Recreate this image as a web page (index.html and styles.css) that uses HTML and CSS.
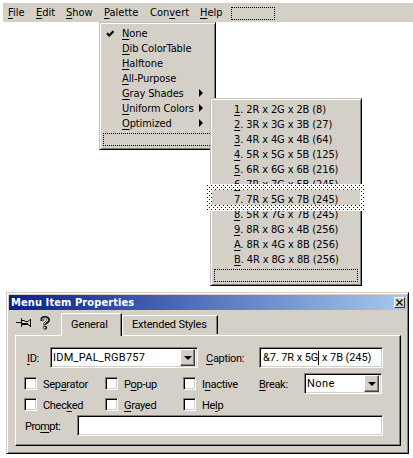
FILE: index.html
```
<!DOCTYPE html>
<html lang="en">
<head>
<meta charset="utf-8">
<title>Menu Item Properties</title>
<link rel="stylesheet" href="styles.css">
</head>
<body>
<nav class="menubar">
  <span class="m-file"><u>F</u>ile</span><span class="m-edit"><u>E</u>dit</span><span class="m-show"><u>S</u>how</span><span class="m-palette"><u>P</u>alette</span><span class="m-convert">Con<u>v</u>ert</span><span class="m-help"><u>H</u>elp</span><i class="slot"></i>
</nav>
<div class="popup palette">
  <div class="item"><svg class="check" width="9" height="8" viewBox="0 0 9 8"><path d="M1 3.2 3.2 5.5 7.5 1.2" fill="none" stroke="#000" stroke-width="2.2"/></svg><span><u>N</u>one</span></div>
  <div class="item"><span><u>D</u>ib ColorTable</span></div>
  <div class="item"><span><u>H</u>alftone</span></div>
  <div class="item"><span><u>A</u>ll-Purpose</span></div>
  <div class="item sub"><span><u>G</u>ray Shades</span></div>
  <div class="item sub"><span><u>U</u>niform Colors</span></div>
  <div class="item sub"><span><u>O</u>ptimized</span></div>
  <i class="slot"></i>
</div>
<div class="popup uniform">
  <div class="item"><span><u>1</u>. 2R x 2G x 2B (8)</span></div>
  <div class="item"><span><u>2</u>. 3R x 3G x 3B (27)</span></div>
  <div class="item"><span><u>3</u>. 4R x 4G x 4B (64)</span></div>
  <div class="item"><span><u>4</u>. 5R x 5G x 5B (125)</span></div>
  <div class="item"><span><u>5</u>. 6R x 6G x 6B (216)</span></div>
  <div class="item"><span><u>6</u>. 7R x 7G x 5B (245)</span></div>
  <div class="item"><span><u>7</u>. 7R x 5G x 7B (245)</span></div>
  <div class="item"><span><u>8</u>. 5R x 7G x 7B (245)</span></div>
  <div class="item"><span><u>9</u>. 8R x 8G x 4B (256)</span></div>
  <div class="item"><span><u>A</u>. 8R x 4G x 8B (256)</span></div>
  <div class="item"><span><u>B</u>. 4R x 8G x 8B (256)</span></div>
  <i class="slot"></i>
  <svg class="frame" width="158" height="27" viewBox="0 0 158 27">
    <defs><pattern id="dots" y="1" width="4" height="4" patternUnits="userSpaceOnUse"><rect width="4" height="4" fill="#fff"/><rect x="0" y="0" width="1" height="1" fill="#000060"/><rect x="2" y="2" width="1" height="1" fill="#000060"/></pattern></defs>
    <path d="M0 0H158V27H0ZM5 6V21H153V6Z" fill="url(#dots)" fill-rule="evenodd"/>
  </svg>
</div>
<section class="dialog">
  <header class="title"><b>Menu Item Properties</b><span class="close"><svg width="7" height="7" viewBox="0 0 7 7"><path d="M.5.5 6.5 6.5M6.5.5.5 6.5" stroke="#000" stroke-width="1.1"/></svg></span></header>
  <div class="tabs">
    <svg class="pin" width="16" height="10" viewBox="0 0 16 10"><path d="M0 4.5H5M5.5 0V9M6 2.5H8L9.5 3.5H12L14 1.5M14.5 1V9M6 6.5H12L14 8" fill="none" stroke="#000"/><path d="M6 5h6v2H6z" fill="#000"/></svg>
    <svg class="help" width="11" height="14" viewBox="0 0 11 14"><path d="M2 5V3.5Q2 1.5 5 1.5T8.5 4Q8.5 5.5 6.5 6.5T5 9" fill="none" stroke="#000" stroke-width="3"/><path d="M2.2 4.5V3.5Q2.5 2 5 2T8 4Q8 5.2 6 6T4.8 8.5" fill="none" stroke="#fff" stroke-width="1"/><circle cx="5.2" cy="11.7" r="1.9" fill="#000"/><rect x="4" y="11" width="1.5" height="1.5" fill="#fff"/></svg>
    <span class="tab general"><span>General</span></span><span class="tab extended"><span>Extended Styles</span></span>
  </div>
  <div class="panel">
    <div class="row r1">
      <label class="l-id"><u>I</u>D:</label>
      <div class="field idbox"><span>IDM_PAL_RGB757</span><i class="drop"></i></div>
      <label class="l-caption"><u>C</u>aption:</label>
      <div class="field caption"><span>&amp;7. 7R x 5G</span><i class="caret"></i><span class="rest">x 7B (245)</span></div>
    </div>
    <div class="middle">
      <div class="checks">
        <label><i class="box"></i><span>Sep<u>a</u>rator</span></label><label><i class="box"></i><span>P<u>o</u>p-up</span></label><label><i class="box"></i><span>I<u>n</u>active</span></label>
        <label><i class="box"></i><span>Chec<u>k</u>ed</span></label><label><i class="box"></i><span><u>G</u>rayed</span></label><label><i class="box"></i><span>He<u>l</u>p</span></label>
      </div>
      <label class="l-break"><u>B</u>reak:</label>
      <div class="field none"><span>None</span><i class="drop"></i></div>
    </div>
    <div class="row r3">
      <label class="l-prompt">Pro<u>m</u>pt:</label>
      <div class="field prompt"></div>
    </div>
  </div>
</section>
</body>
</html>
```
FILE: styles.css
```
* { box-sizing: border-box; }
body { margin: 0; width: 413px; height: 458px; overflow: hidden; background: #fff; color: #000; font: 11px/15px "DejaVu Sans Condensed", "DejaVu Sans", sans-serif; font-stretch: condensed; white-space: nowrap; }
i { display: block; flex: none; }
svg { display: block; flex: none; }
u { text-underline-offset: 2px; text-decoration-thickness: 1px; }
.menubar { display: flex; height: 19px; margin: 3px 0 0 3px; padding: 2px 0 0 5px; background: #d4d0c8; }
.menubar span { flex: none; letter-spacing: 0; }
.m-file { width: 28px; }
.m-edit { width: 30px; }
.m-show { width: 38px; }
.m-palette { width: 46px; }
.m-convert { width: 50px; }
.m-help { width: 26px; }
.slot { border: 1px dotted #000; height: 13px; }
.menubar .slot { width: 44px; margin: 2px 0 0 5px; }
.popup { position: absolute; background: #d4d0c8; border: 1px solid; border-color: #c4c0b8 #000 #000 #c4c0b8; box-shadow: inset 1px 1px #fff, inset -1px -1px #808080; }
.palette { left: 99px; top: 22px; width: 117px; height: 128px; padding: 3px 3px; }
.uniform { left: 210px; top: 98px; width: 152px; height: 188px; padding: 3px 3px; }
.item { display: flex; height: 15px; position: relative; letter-spacing: -.12px; }
.palette .item { padding-left: 19px; }
.uniform .item { padding-left: 20px; }
.check { position: absolute; left: 3px; top: 4px; }
.sub::after { content: ""; margin: 3px 9px 0 auto; width: 0; height: 0; border: 4px solid transparent; border-left-color: #000; border-right: 0; }
.palette .slot, .uniform .slot { margin-top: 2px; }
.frame { position: absolute; left: -4px; top: 85px; }
.dialog { width: 403px; height: 162px; margin: 270px 0 0 6px; padding: 1px; background: #d4d0c8; border: 1px solid; border-color: #d4d0c8 #000 #000 #d4d0c8; box-shadow: inset 1px 1px #fff, inset -1px -1px #808080; font: 11px/15px Roboto, "Liberation Sans", sans-serif; letter-spacing: -.3px; }
.title { display: flex; height: 15px; margin: 1px 1px 0; padding: 0 1px 0 2px; background: linear-gradient(90deg, #0a1e8c, #a6caf0); color: #fff; font: bold 11px/15px "DejaVu Sans Condensed", sans-serif; letter-spacing: .1px; }
.close { display: flex; align-items: center; justify-content: center; width: 11px; height: 11px; margin: 2px 0 0 auto; background: #d4d0c8; border: 1px solid; border-color: #fff #333 #333 #fff; }
.tabs { display: flex; height: 26px; padding-left: 8px; }
.pin { margin-top: 8px; }
.help { margin: 6px 0 0 8px; }
.tab { display: block; flex: none; border-left: 1px solid #fff; border-top: 1px solid #fff; border-right: 1px solid #000; box-shadow: inset -1px 0 #808080; }
.general { width: 61px; height: 23px; margin: 3px 0 0 10px; padding: 3px 0 0 9px; letter-spacing: -.1px; border-radius: 2px 0 0; position: relative; background: #d4d0c8; }
.extended { width: 96px; height: 19px; margin-top: 5px; padding: 1px 0 0 9px; letter-spacing: -.2px; }
.panel { width: 386px; height: 111px; margin: -1px 0 0 7px; padding-top: 11px; border: 1px solid; border-color: #fff #000 #000 #fff; box-shadow: inset -1px -1px #808080; }
.row { display: flex; }
.row label, .l-break { flex: none; }
.field { flex: none; display: flex; height: 21px; padding: 1px 2px; background: #fff; border: 1px solid; border-color: #808080 #fff #fff #808080; box-shadow: inset 1px 1px #000, inset -1px -1px #d4d0c8; line-height: 17px; }
.l-id { width: 34px; padding: 4px 0 0 11px; }
.idbox { width: 148px; letter-spacing: .25px; }
.l-caption { width: 61px; padding: 4px 0 0 8px; }
.caption { width: 124px; padding-left: 3px; letter-spacing: -.1px; }
.drop { width: 15px; height: 17px; margin-left: auto; background: #d4d0c8; border: 1px solid; border-color: #fff #404040 #404040 #fff; box-shadow: inset -1px -1px #808080; padding: 6px 0 0 3px; }
.drop::before { content: ""; display: block; width: 0; border: 4px solid transparent; border-top-color: #000; border-bottom: 0; }
.caret { width: 1px; height: 14px; margin: 2px 3px 0 0; background: #000; }
.middle { display: flex; margin-top: 5px; }
.checks { display: grid; grid-template-columns: 81px 78px 76px; grid-auto-rows: 21px; padding: 4px 0 0 8px; }
.checks label { display: flex; gap: 6px; }
.box { width: 13px; height: 13px; background: #fff; border: 1px solid; border-color: #808080 #fff #fff #808080; box-shadow: inset 1px 1px #000, inset -1px -1px #d4d0c8; }
.l-break { width: 45px; padding-top: 4px; }
.none { width: 78px; letter-spacing: .4px; }
.r3 { margin-top: -4px; }
.l-prompt { width: 61px; padding: 4px 0 0 9px; letter-spacing: -.55px; }
.prompt { width: 306px; }
```
